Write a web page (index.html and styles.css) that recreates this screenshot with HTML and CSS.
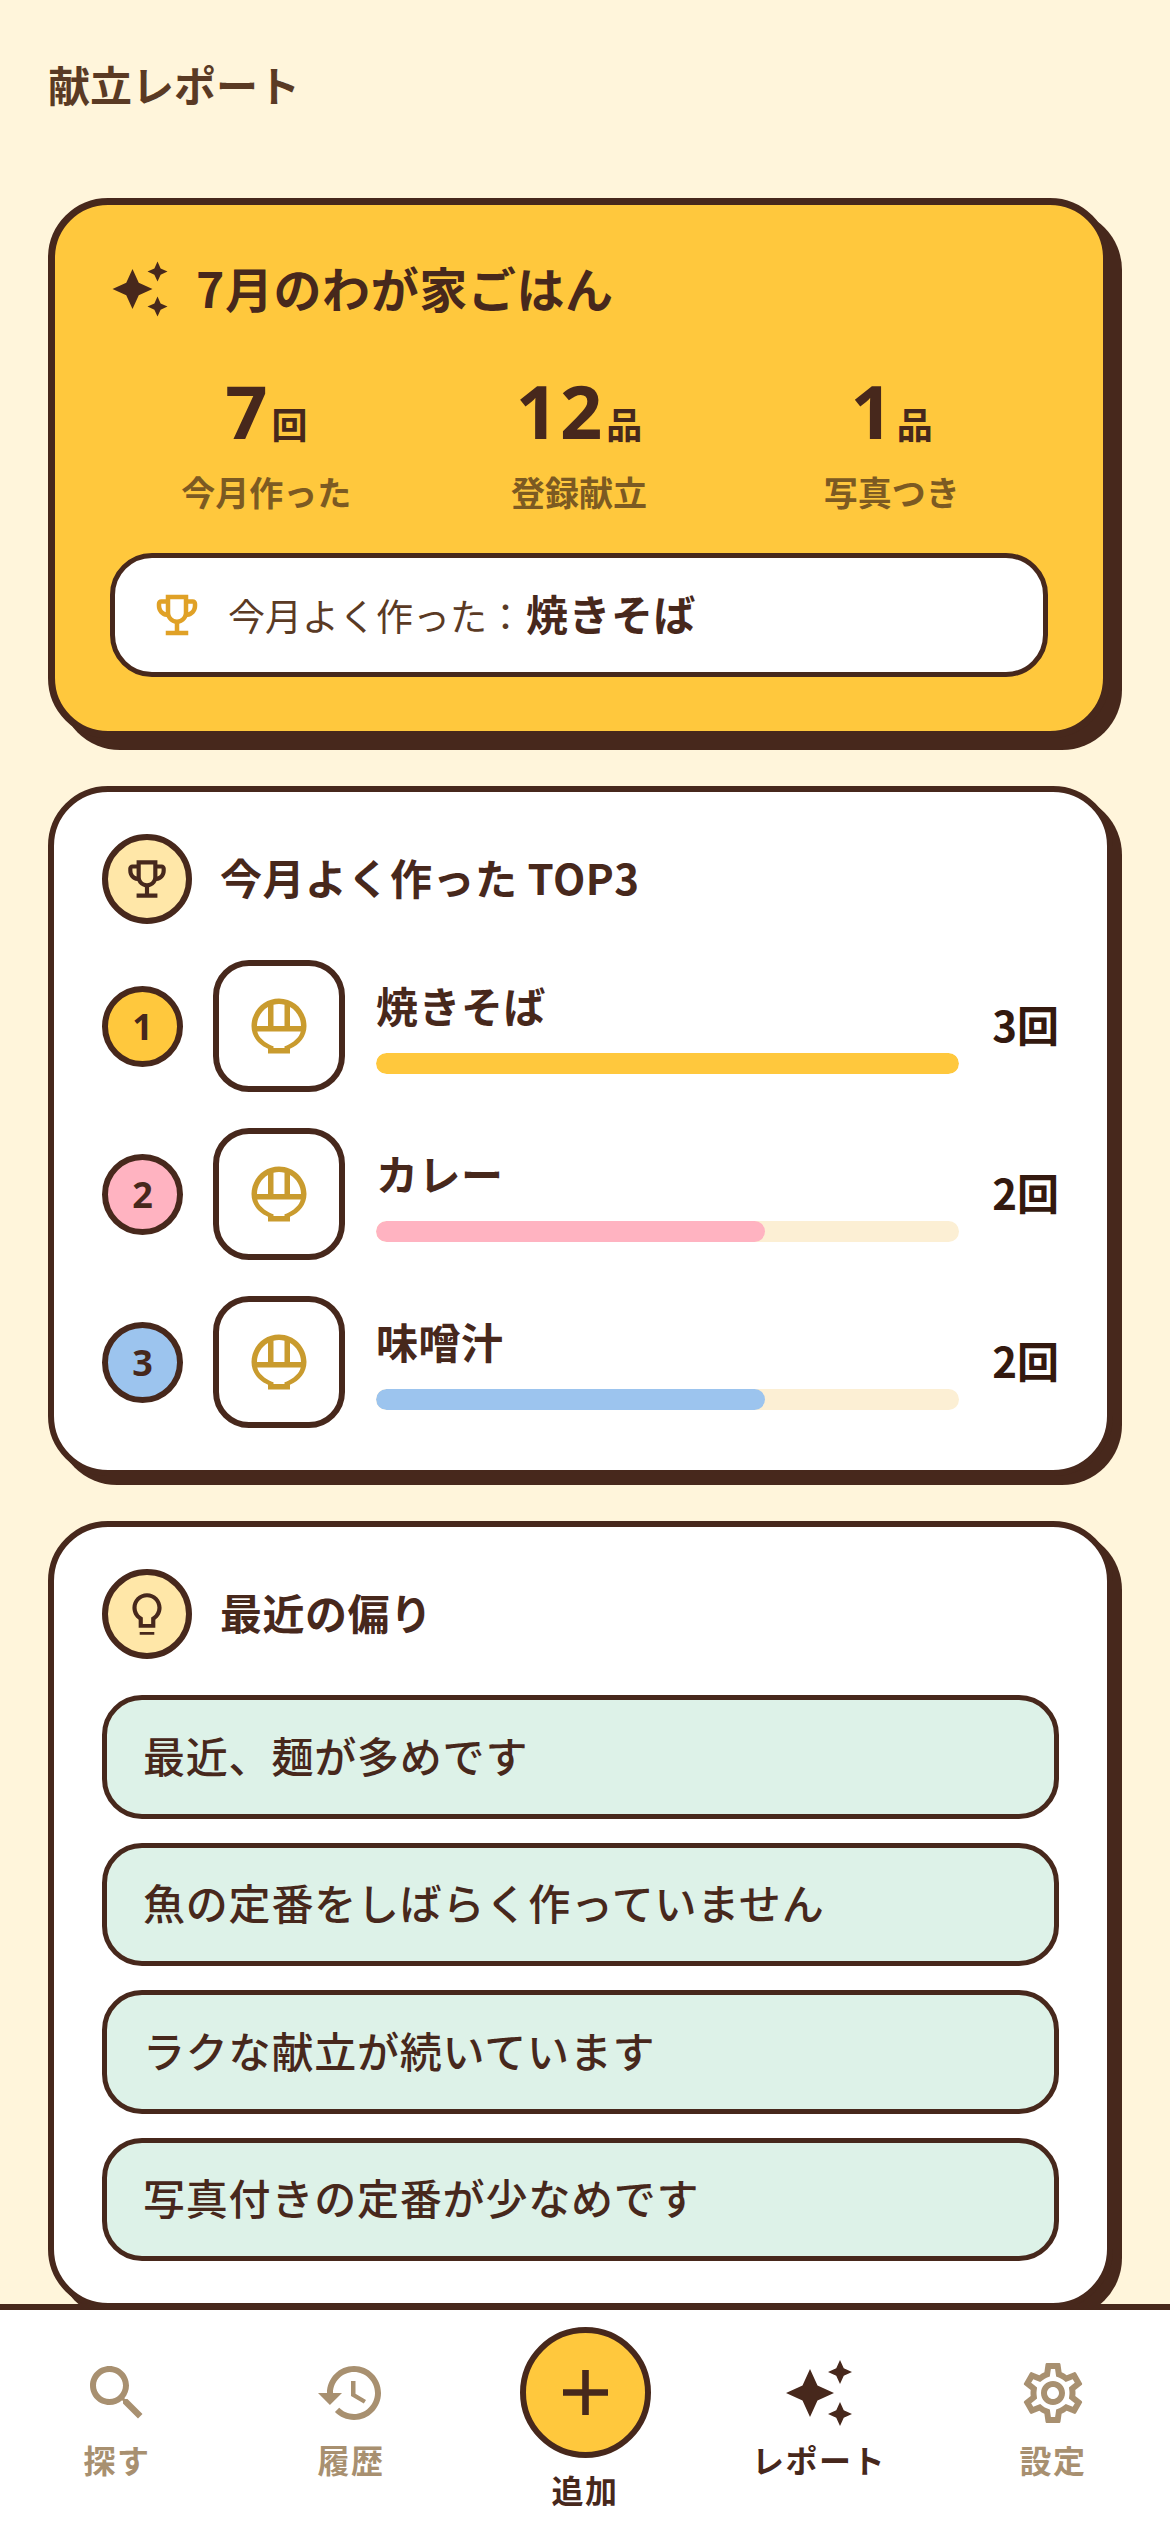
FILE: index.html
```html
<!DOCTYPE html>
<html lang="ja">
<head>
<meta charset="utf-8">
<title>献立レポート</title>
<link rel="stylesheet" href="styles.css">
</head>
<body>
<main class="screen">
  <h1 class="page-title">献立レポート</h1>

  <section class="card card-summary">
    <div class="summary-head">
      <svg class="icon-sparkle" viewBox="0 0 24 24"><path d="M19 9l1.25-2.75L23 5l-2.75-1.25L19 1l-1.25 2.75L15 5l2.75 1.25zm-7.5.5L9 4 6.5 9.5 1 12l5.5 2.5L9 20l2.5-5.5L17 12l-5.5-2.5zM19 15l-1.25 2.75L15 19l2.75 1.25L19 23l1.25-2.75L23 19l-2.75-1.25z"/></svg>
      <h2 class="summary-title">7月のわが家ごはん</h2>
    </div>
    <div class="stats">
      <div class="stat"><div class="stat-value"><span class="stat-num">7</span><span class="stat-unit">回</span></div><div class="stat-label">今月作った</div></div>
      <div class="stat"><div class="stat-value"><span class="stat-num">12</span><span class="stat-unit">品</span></div><div class="stat-label">登録献立</div></div>
      <div class="stat"><div class="stat-value"><span class="stat-num">1</span><span class="stat-unit">品</span></div><div class="stat-label">写真つき</div></div>
    </div>
    <div class="highlight">
      <svg class="icon-hl" viewBox="0 0 24 24"><path d="M19 5h-2V3H7v2H5c-1.1 0-2 .9-2 2v1c0 2.55 1.92 4.63 4.39 4.94.63 1.5 1.98 2.63 3.61 2.96V19H7v2h10v-2h-4v-3.1c1.63-.33 2.98-1.46 3.61-2.96C19.08 12.63 21 10.55 21 8V7c0-1.1-.9-2-2-2zM5 8V7h2v3.82C5.84 10.4 5 9.3 5 8zm7 6c-1.65 0-3-1.35-3-3V5h6v6c0 1.65-1.35 3-3 3zm7-6c0 1.3-.84 2.4-2 2.82V7h2v1z"/></svg>
      <p class="hl-text">今月よく作った：<strong class="hl-name">焼きそば</strong></p>
    </div>
  </section>

  <section class="card">
    <div class="section-head">
      <span class="section-icon"><svg viewBox="0 0 24 24"><path d="M19 5h-2V3H7v2H5c-1.1 0-2 .9-2 2v1c0 2.55 1.92 4.63 4.39 4.94.63 1.5 1.98 2.63 3.61 2.96V19H7v2h10v-2h-4v-3.1c1.63-.33 2.98-1.46 3.61-2.96C19.08 12.63 21 10.55 21 8V7c0-1.1-.9-2-2-2zM5 8V7h2v3.82C5.84 10.4 5 9.3 5 8zm7 6c-1.65 0-3-1.35-3-3V5h6v6c0 1.65-1.35 3-3 3zm7-6c0 1.3-.84 2.4-2 2.82V7h2v1z"/></svg></span>
      <h2 class="section-title">今月よく作った TOP3</h2>
    </div>
    <ol class="ranking">
      <li class="rank-row">
        <span class="rank-badge rank-1">1</span>
        <span class="thumb"><svg viewBox="0 0 24 24"><path d="M22 12c0-5.52-4.48-10-10-10S2 6.48 2 12c0 3.69 2.47 6.86 6 8.25V22h8v-1.75c3.53-1.39 6-4.56 6-8.25zm-2 0h-4V5.08c2.39 1.39 4 3.96 4 6.92zm-6-7.74V12h-4V4.26C10.64 4.09 11.31 4 12 4s1.36.09 2 .26zM4 12c0-2.95 1.61-5.53 4-6.92V12H4zm10.6 7.14l-.6.23V20h-4v-.63l-.6-.23C6.81 18.12 4.47 16 4.1 14h15.8c-.37 2-2.71 4.12-5.3 5.14z"/></svg></span>
        <div class="rank-body"><div class="rank-name">焼きそば</div><div class="track"><div class="fill fill-1" style="width:100%"></div></div></div>
        <span class="rank-count">3回</span>
      </li>
      <li class="rank-row">
        <span class="rank-badge rank-2">2</span>
        <span class="thumb"><svg viewBox="0 0 24 24"><path d="M22 12c0-5.52-4.48-10-10-10S2 6.48 2 12c0 3.69 2.47 6.86 6 8.25V22h8v-1.75c3.53-1.39 6-4.56 6-8.25zm-2 0h-4V5.08c2.39 1.39 4 3.96 4 6.92zm-6-7.74V12h-4V4.26C10.64 4.09 11.31 4 12 4s1.36.09 2 .26zM4 12c0-2.95 1.61-5.53 4-6.92V12H4zm10.6 7.14l-.6.23V20h-4v-.63l-.6-.23C6.81 18.12 4.47 16 4.1 14h15.8c-.37 2-2.71 4.12-5.3 5.14z"/></svg></span>
        <div class="rank-body"><div class="rank-name">カレー</div><div class="track"><div class="fill fill-2" style="width:66.67%"></div></div></div>
        <span class="rank-count">2回</span>
      </li>
      <li class="rank-row">
        <span class="rank-badge rank-3">3</span>
        <span class="thumb"><svg viewBox="0 0 24 24"><path d="M22 12c0-5.52-4.48-10-10-10S2 6.48 2 12c0 3.69 2.47 6.86 6 8.25V22h8v-1.75c3.53-1.39 6-4.56 6-8.25zm-2 0h-4V5.08c2.39 1.39 4 3.96 4 6.92zm-6-7.74V12h-4V4.26C10.64 4.09 11.31 4 12 4s1.36.09 2 .26zM4 12c0-2.95 1.61-5.53 4-6.92V12H4zm10.6 7.14l-.6.23V20h-4v-.63l-.6-.23C6.81 18.12 4.47 16 4.1 14h15.8c-.37 2-2.71 4.12-5.3 5.14z"/></svg></span>
        <div class="rank-body"><div class="rank-name">味噌汁</div><div class="track"><div class="fill fill-3" style="width:66.67%"></div></div></div>
        <span class="rank-count">2回</span>
      </li>
    </ol>
  </section>

  <section class="card">
    <div class="section-head">
      <span class="section-icon"><svg viewBox="0 0 24 24"><path d="M8.5 20.6h7v1.4h-7zM12 2C8.1 2 5 5.1 5 9c0 2.4 1.2 4.5 3 5.7V18.6h8v-3.9c1.8-1.2 3-3.3 3-5.7 0-3.9-3.1-7-7-7zm2.9 11.1l-.9.6V16.8h-4v-3.1l-.9-.6C7.8 12.2 7 10.6 7 9c0-2.8 2.2-5 5-5s5 2.2 5 5c0 1.6-.8 3.2-2.1 4.1z"/></svg></span>
      <h2 class="section-title">最近の偏り</h2>
    </div>
    <ul class="insights">
      <li class="insight">最近、麺が多めです</li>
      <li class="insight">魚の定番をしばらく作っていません</li>
      <li class="insight">ラクな献立が続いています</li>
      <li class="insight">写真付きの定番が少なめです</li>
    </ul>
  </section>
</main>

<nav class="tabbar">
  <a class="tab">
    <svg class="tab-icon" viewBox="0 0 24 24"><path d="M15.5 14h-.79l-.28-.27C15.41 12.59 16 11.11 16 9.5 16 5.91 13.09 3 9.5 3S3 5.91 3 9.5 5.91 16 9.5 16c1.61 0 3.09-.59 4.23-1.57l.27.28v.79l5 4.99L20.49 19l-4.99-5zm-6 0C7.01 14 5 11.99 5 9.5S7.01 5 9.5 5 14 7.01 14 9.5 11.99 14 9.5 14z"/></svg>
    <span class="tab-label">探す</span>
  </a>
  <a class="tab">
    <svg class="tab-icon" viewBox="0 0 24 24"><path d="M13 3c-4.97 0-9 4.03-9 9H1l3.89 3.89.07.14L9 12H6c0-3.87 3.13-7 7-7s7 3.13 7 7-3.13 7-7 7c-1.93 0-3.68-.79-4.94-2.06l-1.42 1.42C8.27 19.99 10.51 21 13 21c4.97 0 9-4.03 9-9s-4.03-9-9-9zm-1 5v5l4.28 2.54.72-1.21-3.5-2.08V8H12z"/></svg>
    <span class="tab-label">履歴</span>
  </a>
  <a class="tab tab-add">
    <span class="add-btn"><svg viewBox="0 0 45 45"><path d="M19.2 0h6.6v19.2H45v6.6H25.8V45h-6.6V25.8H0v-6.6h19.2z"/></svg></span>
    <span class="tab-label">追加</span>
  </a>
  <a class="tab tab-active">
    <svg class="tab-icon" viewBox="0 0 24 24"><path d="M19 9l1.25-2.75L23 5l-2.75-1.25L19 1l-1.25 2.75L15 5l2.75 1.25zm-7.5.5L9 4 6.5 9.5 1 12l5.5 2.5L9 20l2.5-5.5L17 12l-5.5-2.5zM19 15l-1.25 2.75L15 19l2.75 1.25L19 23l1.25-2.75L23 19l-2.75-1.25z"/></svg>
    <span class="tab-label">レポート</span>
  </a>
  <a class="tab">
    <svg class="tab-icon" viewBox="0 0 24 24"><path d="M19.43 12.98c.04-.32.07-.64.07-.98 0-.34-.03-.66-.07-.98l2.11-1.65c.19-.15.24-.42.12-.64l-2-3.46c-.09-.16-.26-.25-.44-.25-.06 0-.12.01-.17.03l-2.49 1c-.52-.4-1.08-.73-1.69-.98l-.38-2.65C14.46 2.18 14.25 2 14 2h-4c-.25 0-.46.18-.49.42l-.38 2.65c-.61.25-1.17.59-1.69.98l-2.49-1c-.06-.02-.12-.03-.18-.03-.17 0-.34.09-.43.25l-2 3.46c-.13.22-.07.49.12.64l2.11 1.65c-.04.32-.07.65-.07.98 0 .33.03.66.07.98l-2.11 1.65c-.19.15-.24.42-.12.64l2 3.46c.09.16.26.25.44.25.06 0 .12-.01.17-.03l2.49-1c.52.4 1.08.73 1.69.98l.38 2.65c.03.24.24.42.49.42h4c.25 0 .46-.18.49-.42l.38-2.65c.61-.25 1.17-.59 1.69-.98l2.49 1c.06.02.12.03.18.03.17 0 .34-.09.43-.25l2-3.46c.12-.22.07-.49-.12-.64l-2.11-1.65zm-1.98-1.71c.04.31.05.52.05.73 0 .21-.02.43-.05.73l-.14 1.13.89.7 1.08.84-.7 1.21-1.27-.51-1.04-.42-.9.68c-.43.32-.84.56-1.25.73l-1.06.43-.16 1.13-.2 1.35h-1.4l-.19-1.35-.16-1.13-1.06-.43c-.43-.18-.83-.41-1.23-.71l-.91-.7-1.06.43-1.27.51-.7-1.21 1.08-.84.89-.7-.14-1.13c-.03-.31-.05-.54-.05-.74s.02-.43.05-.73l.14-1.13-.89-.7-1.08-.84.7-1.21 1.27.51 1.04.42.9-.68c.43-.32.84-.56 1.25-.73l1.06-.43.16-1.13.2-1.35h1.39l.19 1.35.16 1.13 1.06.43c.43.18.83.41 1.23.71l.91.7 1.06-.43 1.27-.51.7 1.21-1.07.85-.89.7.14 1.13zM12 8c-2.21 0-4 1.79-4 4s1.79 4 4 4 4-1.79 4-4-1.79-4-4-4zm0 6c-1.1 0-2-.9-2-2s.9-2 2-2 2 .9 2 2-.9 2-2 2z"/></svg>
    <span class="tab-label">設定</span>
  </a>
</nav>
</body>
</html>
```

FILE: styles.css
```css
* { box-sizing: border-box; }
html, body { margin: 0; padding: 0; }
body {
  width: 1170px;
  height: 2532px;
  display: flex;
  flex-direction: column;
  overflow: hidden;
  background: #FFF5DB;
  color: #47281C;
  font-family: "Noto Sans CJK JP", "Noto Sans", sans-serif;
}
h1, h2, p, ol, ul { margin: 0; padding: 0; list-style: none; }
svg { display: block; fill: currentColor; }

.screen {
  flex: 1;
  min-height: 0;
  overflow: hidden;
  padding: 51px 48px 0;
}
.page-title {
  font-size: 42px;
  line-height: 66px;
  font-weight: 700;
  color: #5A3A24;
  margin-bottom: 81px;
}

.card {
  background: #fff;
  border: 6px solid #47281C;
  border-radius: 60px;
  box-shadow: 9px 9px 0 #47281C;
  padding: 42px 48px;
  margin: 0 9px 45px 0;
}
.card-summary {
  background: #FFC83D;
  border-width: 7px;
  box-shadow: 12px 12px 0 #47281C;
  padding: 54px 55px;
  margin: 0 12px 48px 0;
}

.summary-head { display: flex; align-items: center; gap: 26px; height: 60px; }
.icon-sparkle { width: 60px; height: 60px; flex: none; }
.summary-title { font-size: 48px; line-height: 60px; font-weight: 700; letter-spacing: 0.6px; padding-bottom: 5px; }

.stats { display: grid; grid-template-columns: repeat(3, 1fr); margin-top: 50px; }
.stat { text-align: center; }
.stat-value { line-height: 84px; height: 84px; }
.stat-num {
  font-family: "Noto Sans", "Noto Sans CJK JP", sans-serif;
  font-size: 74px;
  font-weight: 700;
  letter-spacing: 2px;
}
.stat-unit { font-size: 36px; font-weight: 700; margin-left: 2px; }
.stat-label {
  font-size: 34px;
  line-height: 44px;
  font-weight: 700;
  color: #7C5A22;
  margin-top: 17px;
}

.highlight {
  display: flex;
  align-items: center;
  gap: 24px;
  height: 124px;
  margin-top: 39px;
  padding-left: 35px;
  background: #fff;
  border: 5px solid #47281C;
  border-radius: 42px;
}
.icon-hl { width: 54px; height: 54px; flex: none; color: #E0A126; }
.hl-text { font-size: 37px; line-height: 56px; color: #5A3A24; white-space: nowrap; padding-bottom: 3px; }
.hl-name { font-size: 42px; font-weight: 700; color: #47281C; letter-spacing: 0.5px; margin-left: 2px; }

.section-head { display: flex; align-items: center; gap: 28px; }
.section-icon {
  width: 90px;
  height: 90px;
  flex: none;
  display: flex;
  align-items: center;
  justify-content: center;
  background: #FFE7A8;
  border: 6px solid #47281C;
  border-radius: 50%;
}
.section-icon svg { width: 50px; height: 50px; }
.section-title { font-size: 42px; line-height: 60px; font-weight: 700; letter-spacing: 0.5px; padding-bottom: 4px; }

.ranking { display: flex; flex-direction: column; gap: 36px; margin-top: 36px; }
.rank-row { display: flex; align-items: center; }
.rank-badge {
  width: 81px;
  height: 81px;
  flex: none;
  display: flex;
  align-items: center;
  justify-content: center;
  border: 6px solid #47281C;
  border-radius: 50%;
  font-family: "Noto Sans", "Noto Sans CJK JP", sans-serif;
  font-size: 36px;
  font-weight: 700;
}
.rank-1 { background: #FFC83D; }
.rank-2 { background: #FFB3C1; }
.rank-3 { background: #9CC4EE; }
.thumb {
  width: 132px;
  height: 132px;
  flex: none;
  display: flex;
  align-items: center;
  justify-content: center;
  margin-left: 30px;
  background: #fff;
  border: 6px solid #47281C;
  border-radius: 36px;
  color: #C99B2E;
}
.thumb svg { width: 66px; height: 66px; }
.rank-body { flex: 1; min-width: 0; margin-left: 31px; }
.rank-name { font-size: 42px; line-height: 54px; font-weight: 700; letter-spacing: 0.5px; margin-bottom: 21px; }
.track { height: 21px; border-radius: 11px; background: #FCEFD4; overflow: hidden; }
.fill { height: 100%; border-radius: 11px; }
.fill-1 { background: #FFC83D; }
.fill-2 { background: #FFB3C1; }
.fill-3 { background: #9CC4EE; }
.rank-count {
  width: 100px;
  flex: none;
  text-align: right;
  font-size: 42px;
  font-weight: 700;
  color: #33190F;
  padding-bottom: 5px;
}

.insights { display: flex; flex-direction: column; gap: 24px; margin-top: 36px; }
.insight {
  height: 123.5px;
  display: flex;
  align-items: center;
  padding: 0 0 5px 36px;
  background: #DDF2E8;
  border: 5px solid #47281C;
  border-radius: 40px;
  font-size: 42px;
  font-weight: 500;
  letter-spacing: 0.8px;
  color: #47281C;
}

.tabbar {
  flex: none;
  height: 228px;
  display: grid;
  grid-template-columns: repeat(5, 1fr);
  background: #fff;
  border-top: 6px solid #47281C;
  position: relative;
}
.tab {
  display: flex;
  flex-direction: column;
  align-items: center;
  padding-top: 47px;
  color: #A89070;
}
.tab-icon { width: 72px; height: 72px; flex: none; }
.tab-label { font-size: 32px; line-height: 44px; font-weight: 700; letter-spacing: 1.5px; margin-top: 8px; }
.tab-active { color: #47281C; }
.tab-add { padding-top: 17px; color: #47281C; }
.tab-add .tab-label { margin-top: 9px; }
.add-btn {
  width: 131px;
  height: 131px;
  flex: none;
  display: flex;
  align-items: center;
  justify-content: center;
  background: #FFC83D;
  border: 6px solid #47281C;
  border-radius: 50%;
}
.add-btn svg { width: 45px; height: 45px; }
```
